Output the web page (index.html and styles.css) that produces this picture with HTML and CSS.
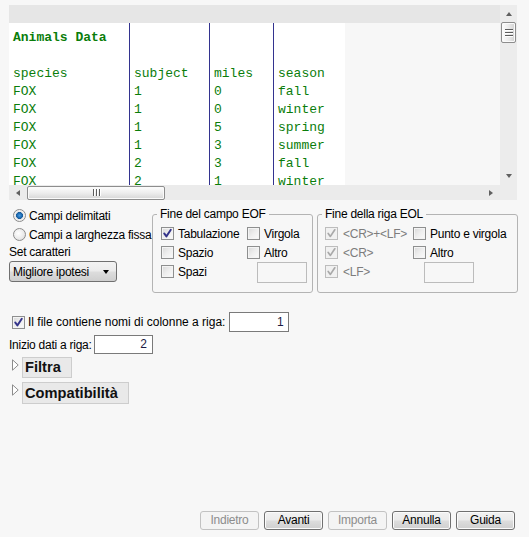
FILE: index.html
```html
<!DOCTYPE html>
<html lang="it">
<head>
<meta charset="utf-8">
<title>Importa testo</title>
<link rel="stylesheet" href="styles.css">
</head>
<body>
<div class="preview">
  <div class="pv-main">
    <div class="pv-head"></div>
    <div class="pv-body">
      <div class="tbl">
        <div class="col c1">
          <div class="cell b">Animals Data</div>
          <div class="cell"></div>
          <div class="cell">species</div>
          <div class="cell">FOX</div>
          <div class="cell">FOX</div>
          <div class="cell">FOX</div>
          <div class="cell">FOX</div>
          <div class="cell">FOX</div>
          <div class="cell">FOX</div>
        </div>
        <div class="col c2">
          <div class="cell"></div>
          <div class="cell"></div>
          <div class="cell">subject</div>
          <div class="cell">1</div>
          <div class="cell">1</div>
          <div class="cell">1</div>
          <div class="cell">1</div>
          <div class="cell">2</div>
          <div class="cell">2</div>
        </div>
        <div class="col c3">
          <div class="cell"></div>
          <div class="cell"></div>
          <div class="cell">miles</div>
          <div class="cell">0</div>
          <div class="cell">0</div>
          <div class="cell">5</div>
          <div class="cell">3</div>
          <div class="cell">3</div>
          <div class="cell">1</div>
        </div>
        <div class="col c4">
          <div class="cell"></div>
          <div class="cell"></div>
          <div class="cell">season</div>
          <div class="cell">fall</div>
          <div class="cell">winter</div>
          <div class="cell">spring</div>
          <div class="cell">summer</div>
          <div class="cell">fall</div>
          <div class="cell">winter</div>
        </div>
      </div>
    </div>
  </div>
  <div class="vscroll">
    <div class="sb-btn"><span class="arr up"></span></div>
    <div class="vthumb"><i></i><i></i><i></i></div>
    <div class="sb-fill"></div>
    <div class="sb-btn"><span class="arr down"></span></div>
  </div>
  <div class="hscroll">
    <div class="sb-btn h"><span class="arr left"></span></div>
    <div class="hthumb"><i></i><i></i><i></i></div>
    <div class="sb-fill"></div>
    <div class="sb-btn h"><span class="arr right"></span></div>
  </div>
  <div class="corner"></div>
</div>

<div class="options">
  <div class="leftcol">
    <div class="radio-row"><span class="radio on"></span><span>Campi delimitati</span></div>
    <div class="radio-row"><span class="radio"></span><span>Campi a larghezza fissa</span></div>
    <div class="set-label">Set caratteri</div>
    <div class="select"><span>Migliore ipotesi</span><span class="sel-arr"></span></div>
  </div>

  <fieldset class="fs fs1">
    <legend>Fine del campo EOF</legend>
    <div class="fs-grid g1">
      <div class="opt"><span class="cb checked"><svg viewBox="0 0 13 13" width="13" height="13"><path d="M3.2 6.4 L5.4 9.4 L9.8 2.8" fill="none" stroke="#34348a" stroke-width="1.9" stroke-linecap="round" stroke-linejoin="round"/></svg></span><span>Tabulazione</span></div>
      <div class="opt"><span class="cb"></span><span>Virgola</span></div>
      <div class="opt"><span class="cb"></span><span>Spazio</span></div>
      <div class="opt"><span class="cb"></span><span>Altro</span></div>
      <div class="opt"><span class="cb"></span><span>Spazi</span></div>
      <div class="field f1"></div>
    </div>
  </fieldset>

  <fieldset class="fs fs2">
    <legend>Fine della riga EOL</legend>
    <div class="fs-grid g2">
      <div class="opt dis"><span class="cb checked dis"><svg viewBox="0 0 13 13" width="13" height="13"><path d="M3.2 6.4 L5.4 9.4 L9.8 2.8" fill="none" stroke="#a9a9a9" stroke-width="1.7" stroke-linecap="round" stroke-linejoin="round"/></svg></span><span>&lt;CR&gt;+&lt;LF&gt;</span></div>
      <div class="opt"><span class="cb"></span><span>Punto e virgola</span></div>
      <div class="opt dis"><span class="cb checked dis"><svg viewBox="0 0 13 13" width="13" height="13"><path d="M3.2 6.4 L5.4 9.4 L9.8 2.8" fill="none" stroke="#a9a9a9" stroke-width="1.7" stroke-linecap="round" stroke-linejoin="round"/></svg></span><span>&lt;CR&gt;</span></div>
      <div class="opt"><span class="cb"></span><span>Altro</span></div>
      <div class="opt dis"><span class="cb checked dis"><svg viewBox="0 0 13 13" width="13" height="13"><path d="M3.2 6.4 L5.4 9.4 L9.8 2.8" fill="none" stroke="#a9a9a9" stroke-width="1.7" stroke-linecap="round" stroke-linejoin="round"/></svg></span><span>&lt;LF&gt;</span></div>
      <div class="field f2"></div>
    </div>
  </fieldset>
</div>

<div class="hdr-row">
  <span class="cb checked"><svg viewBox="0 0 13 13" width="13" height="13"><path d="M3.2 6.4 L5.4 9.4 L9.8 2.8" fill="none" stroke="#34348a" stroke-width="1.9" stroke-linecap="round" stroke-linejoin="round"/></svg></span>
  <span class="hdr-text">Il file contiene nomi di colonne a riga:</span>
  <span class="num">1</span>
</div>
<div class="start-row">
  <span class="start-text">Inizio dati a riga:</span>
  <span class="num n2">2</span>
</div>

<div class="disc">
  <svg class="tri" viewBox="0 0 7 12" width="7" height="12"><path d="M0.5 0.8 L6.2 6 L0.5 11.2 Z" fill="#fff" stroke="#8c8c8c" stroke-width="1"/></svg>
  <div class="disc-box">Filtra</div>
</div>
<div class="disc d2">
  <svg class="tri" viewBox="0 0 7 12" width="7" height="12"><path d="M0.5 0.8 L6.2 6 L0.5 11.2 Z" fill="#fff" stroke="#8c8c8c" stroke-width="1"/></svg>
  <div class="disc-box">Compatibilità</div>
</div>

<div class="buttons">
  <div class="btn disabled">Indietro</div>
  <div class="btn">Avanti</div>
  <div class="btn disabled">Importa</div>
  <div class="btn">Annulla</div>
  <div class="btn">Guida</div>
</div>
</body>
</html>
```

FILE: styles.css
```css
* { box-sizing: border-box; }

html, body {
  margin: 0;
  padding: 0;
}

body {
  width: 529px;
  height: 537px;
  background: #f7f7f7;
  font-family: "Liberation Sans", Arial, sans-serif;
  font-size: 12px;
  letter-spacing: -0.25px;
  color: #000;
  display: flex;
  flex-direction: column;
  overflow: hidden;
}

/* ---------- preview ---------- */
.preview {
  margin: 5px 0 0 9px;
  width: 508px;
  display: grid;
  grid-template-columns: 491px 17px;
  grid-template-rows: 180px 15px;
}

.pv-main {
  background: #f7f7f7;
  overflow: hidden;
  display: flex;
  flex-direction: column;
}

.pv-head {
  height: 18px;
  background: #e6e6e6;
  flex: none;
}

.pv-body {
  flex: 1;
  display: flex;
  overflow: hidden;
}

.tbl {
  display: flex;
  background: #fff;
  height: 100%;
}

.col {
  padding-top: 6px;
  padding-left: 4px;
  font-family: "Liberation Mono", "Courier New", monospace;
  font-size: 13px;
  line-height: 18px;
  letter-spacing: 0;
  color: #0a7d0a;
  white-space: nowrap;
}

.c1 { width: 120px; }
.c2 { width: 80px; border-left: 1px solid #33338f; }
.c3 { width: 64px; border-left: 1px solid #33338f; }
.c4 { width: 72px; border-left: 1px solid #33338f; }

.cell { height: 18px; }
.cell.b { font-weight: bold; }

/* scrollbars */
.vscroll {
  background: #ececec;
  display: flex;
  flex-direction: column;
  align-items: center;
}

.sb-btn {
  height: 17px;
  width: 17px;
  display: flex;
  align-items: center;
  justify-content: center;
  flex: none;
}

.sb-btn.h { height: 15px; }

.sb-fill { flex: 1; }

.arr {
  width: 0;
  height: 0;
  border-style: solid;
  display: block;
}

.arr.up { border-width: 0 3.5px 4px 3.5px; border-color: transparent transparent #606060 transparent; margin-top: 1px; }
.arr.down { border-width: 4px 3.5px 0 3.5px; border-color: #606060 transparent transparent transparent; margin-top: -2px; }
.arr.left { border-width: 3.5px 4px 3.5px 0; border-color: transparent #606060 transparent transparent; }
.arr.right { border-width: 3.5px 0 3.5px 4px; border-color: transparent transparent transparent #606060; margin-left: -2px; }

.vthumb {
  width: 15px;
  height: 21px;
  border: 1px solid #8d8d8d;
  border-radius: 2px;
  background: linear-gradient(90deg, #fdfdfd 0%, #e9e9e9 55%, #d2d2d2 100%);
  box-shadow: inset 0 0 0 1px #fafafa;
  display: flex;
  flex-direction: column;
  align-items: center;
  justify-content: center;
  gap: 2px;
  flex: none;
}

.vthumb i {
  display: block;
  width: 8px;
  height: 1px;
  background: #5c5c5c;
  box-shadow: 0 1px 0 #fff;
}

.hscroll {
  background: #ebebeb;
  display: flex;
  align-items: center;
}

.hthumb {
  width: 138px;
  height: 14px;
  margin-left: 1px;
  border: 1px solid #8d8d8d;
  border-radius: 2px;
  background: linear-gradient(180deg, #fdfdfd 0%, #ededed 50%, #d6d6d6 100%);
  box-shadow: inset 0 0 0 1px #fafafa;
  display: flex;
  align-items: center;
  justify-content: center;
  gap: 2px;
  flex: none;
}

.hthumb i {
  display: block;
  width: 1px;
  height: 7px;
  background: #5c5c5c;
  box-shadow: 1px 0 0 #fff;
}

.corner { background: #ececec; }

/* ---------- options ---------- */
.options {
  display: flex;
  margin: 6px 0 0 9px;
  height: 87px;
}

.leftcol {
  width: 143px;
  flex: none;
  white-space: nowrap;
}

.radio-row {
  height: 19px;
  display: flex;
  align-items: center;
  gap: 2px;
  padding-left: 4px;
}

.radio {
  width: 13px;
  height: 13px;
  border-radius: 50%;
  border: 1px solid #8b8b8b;
  background: radial-gradient(circle at 40% 40%, #ffffff 0%, #e9e9e9 60%, #cfcfcf 100%);
  flex: none;
  margin-right: 1px;
}

.radio.on {
  background:
    radial-gradient(circle at 50% 50%, #4a9be0 0%, #1e6cb3 30%, #1a5a98 42%, #e7e7e7 48%, #f4f4f4 70%, #d9d9d9 100%);
}

.set-label {
  height: 17px;
  line-height: 17px;
}

.select {
  width: 108px;
  height: 21px;
  border: 1px solid #707070;
  border-radius: 3px;
  background: linear-gradient(180deg, #f3f3f3 0%, #ebebeb 48%, #dddddd 52%, #cfcfcf 100%);
  display: flex;
  align-items: center;
  justify-content: space-between;
  padding: 0 7px 0 3px;
}

.sel-arr {
  width: 0;
  height: 0;
  border-style: solid;
  border-width: 4px 3.5px 0 3.5px;
  border-color: #000 transparent transparent transparent;
}

.fs {
  margin: 0;
  padding: 0 0 0 8px;
  border: 1px solid #b4b4b4;
  border-radius: 3px;
  height: 87px;
  min-width: 0;
  flex: none;
}

.fs legend {
  padding: 0 3px;
  margin-left: -4px;
  line-height: 16px;
  font-size: 12px;
}

.fs1 { width: 161px; }
.fs2 { width: 201px; margin-left: 4px; padding-left: 7px; }
.fs2 legend { margin-left: -3px; }

.fs-grid {
  display: grid;
  grid-auto-rows: 19px;
  padding-top: 2px;
}

.g1 { grid-template-columns: 86px auto; }
.g2 { grid-template-columns: 88px auto; }

.opt {
  display: flex;
  align-items: center;
  gap: 4px;
  white-space: nowrap;
}

.opt.dis { color: #7d7d7d; gap: 5px; }

.cb {
  width: 13px;
  height: 13px;
  flex: none;
  border: 1px solid #8e8f8f;
  background: linear-gradient(135deg, #d8d8d8 0%, #eeeeee 50%, #fbfbfb 100%);
  box-shadow: inset 0 0 0 1px #f4f4f4;
  position: relative;
}

.cb svg {
  position: absolute;
  left: -1px;
  top: -1px;
}

.cb.dis {
  border-color: #bdbdbd;
  background: #f1f1f1;
  box-shadow: none;
}

.field {
  width: 50px;
  height: 21px;
  border: 1px solid #bcbcbc;
  background: #f7f7f7;
  align-self: start;
}

.f1 { margin-left: 10px; }
.f2 { margin-left: 11px; }

/* ---------- header rows ---------- */
.hdr-row {
  display: flex;
  align-items: center;
  margin: 19px 0 0 12px;
  height: 20px;
  white-space: nowrap;
}

.hdr-row .cb { margin-right: 3px; }

.hdr-text { margin-right: 4px; letter-spacing: 0; }

.num {
  width: 60px;
  height: 20px;
  border: 1px solid #7a7a7a;
  background: #fff;
  text-align: right;
  padding-right: 5px;
  line-height: 18px;
  color: #1c1c44;
  flex: none;
}

.start-row {
  display: flex;
  align-items: center;
  margin-top: 3px;
  padding-left: 9px;
  height: 19px;
  white-space: nowrap;
}

.start-text { margin-right: 2px; }

.num.n2 { width: 59px; height: 19px; line-height: 17px; }

/* ---------- disclosure ---------- */
.disc {
  display: flex;
  align-items: flex-start;
  margin: 3px 0 0 12px;
  gap: 3px;
}

.disc.d2 { margin-top: 4px; }

.tri { margin-top: 2px; flex: none; }

.disc-box {
  height: 21px;
  line-height: 19px;
  padding: 0 10px 0 2px;
  background: #e9e9e9;
  border: 1px solid #cdcdcd;
  font-weight: bold;
  font-size: 14.67px;
  letter-spacing: 0;
  color: #111;
}

.d2 .disc-box { height: 22px; line-height: 20px; }

/* ---------- buttons ---------- */
.buttons {
  margin-top: auto;
  margin-bottom: 7px;
  display: flex;
  justify-content: flex-end;
  gap: 5px;
  padding-right: 14px;
}

.btn {
  width: 59px;
  height: 19px;
  border: 1px solid #707070;
  border-radius: 3px;
  background: linear-gradient(180deg, #f2f2f2 0%, #ebebeb 48%, #dddddd 52%, #cfcfcf 100%);
  box-shadow: inset 0 0 0 1px #fbfbfb;
  text-align: center;
  line-height: 17px;
}

.btn.disabled {
  border-color: #c2c2c2;
  background: #f4f4f4;
  box-shadow: none;
  color: #8c8c8c;
}
```
